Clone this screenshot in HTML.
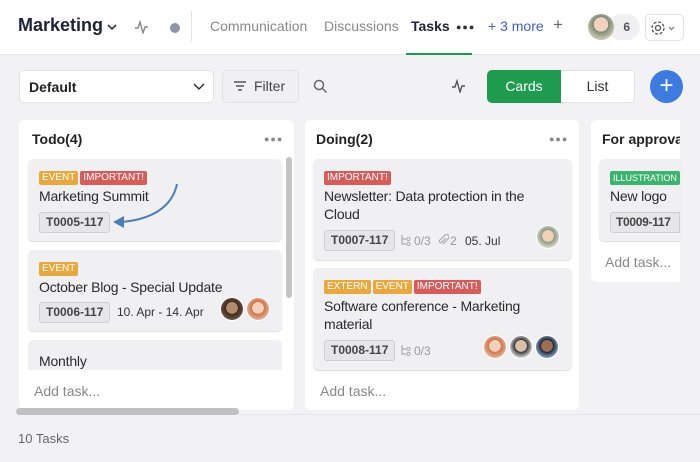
<!DOCTYPE html>
<html><head><meta charset="utf-8"><style>
*{box-sizing:border-box;margin:0;padding:0}
body{width:700px;height:462px;overflow:hidden;background:#f2f2f4;font-family:"Liberation Sans",sans-serif;color:#222;position:relative;font-size:14px}
.a{position:absolute}
.hdr{left:0;top:0;width:700px;height:55px;background:#fff;border-bottom:1px solid #e3e3e6}
.nav{top:18px;font-size:14px;color:#888}
.col{background:#fff;border-radius:6px}
.card{background:#f0f0f2;border-radius:5px;box-shadow:0 1px 1px #ddd}
.tags{line-height:14px;height:14px;font-size:0;white-space:nowrap}
.tag{display:inline-block;height:14px;line-height:14px;font-size:10px;color:#fff;padding:0 3px;border-radius:2px;margin-right:2px;vertical-align:top}
.o{background:#e8a83e}.r{background:#d65b5b}.g{background:#3cb46e}
.ttl{font-size:14px;color:#2a2a2a;line-height:18px;letter-spacing:-0.2px}
.id{display:inline-block;height:21px;line-height:19px;font-size:12px;font-weight:bold;color:#444;background:#e6e6e8;border:1px solid #cfcfd2;border-radius:3px;padding:0 6px}
.meta{font-size:12px;color:#999}
.add{font-size:14px;color:#888}
.av{width:24px;height:24px;border-radius:50%;border:1px solid #fff}
.ch{font-size:14px;font-weight:bold}
.dots{color:#888;font-size:9px;letter-spacing:1px}
.btn{background:#fff;border:1px solid #e1e1e4;border-radius:5px}
</style></head><body>
<div class="a hdr"></div>
<div class="a" style="left:18px;top:15px;font-size:18px;font-weight:bold;color:#1d2333">Marketing</div>
<svg class="a" style="left:106px;top:22px" width="12" height="10"><path d="M2 3l4 4 4-4" stroke="#333" stroke-width="1.6" fill="none"/></svg>
<svg class="a" style="left:134px;top:20px" width="16" height="14"><path d="M1 8h3l2-6 3 11 2-6h3" stroke="#888" stroke-width="1.4" fill="none"/></svg>
<div class="a" style="left:170px;top:23px;width:10px;height:10px;border-radius:50%;background:#8d95ad"></div>
<div class="a" style="left:191px;top:11px;width:1px;height:30px;background:#e3e3e6"></div>
<div class="a nav" style="left:210px">Communication</div>
<div class="a nav" style="left:324px">Discussions</div>
<div class="a nav" style="left:411px;color:#1d2333;font-weight:bold">Tasks</div>
<div class="a dots" style="left:456px;top:22px;color:#333">●●●</div>
<div class="a nav" style="left:488px;color:#3a5fcd">+ 3 more</div>
<div class="a nav" style="left:553px;color:#666;font-size:17px;top:15px">+</div>
<div class="a" style="left:406px;top:53px;width:66px;height:2px;background:#1e9b4e"></div>
<div class="a" style="left:608px;top:14px;width:32px;height:26px;border-radius:13px;background:#f0f0f2;color:#555;font-size:12px;font-weight:bold;text-align:right;padding:6px 10px 0 0">6</div>
<div class="a" style="left:588px;top:14px;width:26px;height:26px;border-radius:50%;background:radial-gradient(circle at 50% 40%,#f0d2bd 35%,#7a8a70 36%,#c9c0b0 70%)"></div>
<div class="a btn" style="left:645px;top:14px;width:39px;height:27px"></div>
<svg class="a" style="left:650px;top:19px" width="30" height="18"><circle cx="8" cy="9" r="2.5" stroke="#555" fill="none" stroke-width="1.3"/><circle cx="8" cy="9" r="6" stroke="#555" fill="none" stroke-width="1.3" stroke-dasharray="3 1.7"/><path d="M19 8l2.5 2.5 2.5-2.5" stroke="#777" fill="none" stroke-width="1.2"/></svg>

<div class="a btn" style="left:19px;top:70px;width:195px;height:33px"></div>
<div class="a" style="left:29px;top:79px;font-weight:bold;font-size:14px;color:#222">Default</div>
<svg class="a" style="left:193px;top:82px" width="12" height="10"><path d="M1 2l5 5 5-5" stroke="#333" stroke-width="1.5" fill="none"/></svg>
<div class="a btn" style="left:222px;top:70px;width:77px;height:33px;background:#f0f0f2"></div>
<svg class="a" style="left:233px;top:80px" width="14" height="12"><path d="M1 2h12M3 6h8M5 10h4" stroke="#555" stroke-width="1.5"/></svg>
<div class="a" style="left:254px;top:78px;color:#444">Filter</div>
<svg class="a" style="left:313px;top:79px" width="15" height="15"><circle cx="6" cy="6" r="4.5" stroke="#666" stroke-width="1.5" fill="none"/><path d="M9.5 9.5l4 4" stroke="#666" stroke-width="1.5"/></svg>
<svg class="a" style="left:451px;top:79px" width="16" height="14"><path d="M1 8h3l2-6 3 11 2-6h3" stroke="#555" stroke-width="1.4" fill="none"/></svg>
<div class="a" style="left:487px;top:70px;width:74px;height:33px;background:#1e9b4e;border-radius:5px 0 0 5px;color:#fff;text-align:center;line-height:33px">Cards</div>
<div class="a" style="left:561px;top:70px;width:74px;height:33px;background:#fff;border:1px solid #e1e1e4;border-left:0;border-radius:0 5px 5px 0;color:#333;text-align:center;line-height:31px">List</div>
<div class="a" style="left:650px;top:70px;width:33px;height:33px;border-radius:50%;background:#3d7be0;color:#fff;text-align:center;font-size:24px;line-height:31px">+</div>

<!-- Todo -->
<div class="a col" style="left:19px;top:120px;width:275px;height:290px"></div>
<div class="a ch" style="left:32px;top:131px">Todo(4)</div>
<div class="a dots" style="left:264px;top:134px">●●●</div>
<div class="a card" style="left:28px;top:159px;width:254px;height:82px"></div>
<div class="a tags" style="left:39px;top:171px"><span class="tag o">EVENT</span><span class="tag r">IMPORTANT!</span></div>
<div class="a ttl" style="left:39px;top:187px">Marketing Summit</div>
<div class="a id" style="left:39px;top:212px">T0005-117</div>
<svg class="a" style="left:110px;top:180px" width="72" height="50"><path d="M67 4C62 28 40 40 10 42" stroke="#4a7fb8" stroke-width="2" fill="none"/><path d="M3 42l11-6v12z" fill="#4a7fb8"/></svg>
<div class="a card" style="left:28px;top:250px;width:254px;height:81px"></div>
<div class="a tags" style="left:39px;top:262px"><span class="tag o">EVENT</span></div>
<div class="a ttl" style="left:39px;top:278px">October Blog - Special Update</div>
<div class="a id" style="left:39px;top:302px">T0006-117</div>
<div class="a" style="left:117px;top:305px;font-size:12px;color:#333">10. Apr - 14. Apr</div>
<div class="a av" style="left:220px;top:297px;background:radial-gradient(circle at 50% 45%,#b58a6a 35%,#3a2a20 37%,#6a5040 70%)"></div>
<div class="a av" style="left:246px;top:297px;background:radial-gradient(circle at 50% 45%,#f3d0b8 35%,#d0704a 37%,#e0b090 70%)"></div>
<div class="a card" style="left:28px;top:340px;width:254px;height:30px;border-radius:5px 5px 0 0;box-shadow:none"></div>
<div class="a ttl" style="left:39px;top:352px">Monthly</div>
<div class="a" style="left:286px;top:157px;width:6px;height:141px;border-radius:3px;background:#c4c4c6"></div>
<div class="a add" style="left:34px;top:383px">Add task...</div>

<!-- Doing -->
<div class="a col" style="left:305px;top:120px;width:274px;height:290px"></div>
<div class="a ch" style="left:316px;top:131px">Doing(2)</div>
<div class="a dots" style="left:549px;top:134px">●●●</div>
<div class="a card" style="left:313px;top:159px;width:259px;height:101px"></div>
<div class="a tags" style="left:324px;top:171px"><span class="tag r">IMPORTANT!</span></div>
<div class="a ttl" style="left:324px;top:187px;width:225px">Newsletter: Data protection in the Cloud</div>
<div class="a id" style="left:324px;top:230px">T0007-117</div>
<svg class="a" style="left:400px;top:234px" width="12" height="12"><path d="M2 1v9h4M2 5h4" stroke="#aaa" fill="none" stroke-width="1.2"/><circle cx="8.5" cy="5" r="1.6" stroke="#aaa" fill="none"/><circle cx="8.5" cy="10" r="1.6" stroke="#aaa" fill="none"/></svg>
<div class="a meta" style="left:414px;top:234px">0/3</div>
<svg class="a" style="left:437px;top:234px" width="12" height="12"><path d="M9 4L4.5 8.5a1.5 1.5 0 0 1-2-2L8 1a2.5 2.5 0 0 1 3.5 3.5L6 10" stroke="#aaa" fill="none" stroke-width="1.2"/></svg>
<div class="a meta" style="left:450px;top:234px">2</div>
<div class="a" style="left:465px;top:234px;font-size:12px;color:#333">05. Jul</div>
<div class="a av" style="left:536px;top:225px;background:radial-gradient(circle at 50% 45%,#efd0b8 35%,#8a9a80 37%,#d0d0c8 70%)"></div>
<div class="a card" style="left:313px;top:268px;width:259px;height:102px"></div>
<div class="a tags" style="left:324px;top:280px"><span class="tag o">EXTERN</span><span class="tag o">EVENT</span><span class="tag r">IMPORTANT!</span></div>
<div class="a ttl" style="left:324px;top:297px;width:240px">Software conference - Marketing material</div>
<div class="a id" style="left:324px;top:340px">T0008-117</div>
<svg class="a" style="left:400px;top:344px" width="12" height="12"><path d="M2 1v9h4M2 5h4" stroke="#aaa" fill="none" stroke-width="1.2"/><circle cx="8.5" cy="5" r="1.6" stroke="#aaa" fill="none"/><circle cx="8.5" cy="10" r="1.6" stroke="#aaa" fill="none"/></svg>
<div class="a meta" style="left:414px;top:344px">0/3</div>
<div class="a av" style="left:483px;top:335px;background:radial-gradient(circle at 50% 45%,#f3d0b8 35%,#d0704a 37%,#e0b090 70%)"></div>
<div class="a av" style="left:509px;top:335px;background:radial-gradient(circle at 50% 45%,#d8c0a8 35%,#333 37%,#ccc 70%)"></div>
<div class="a av" style="left:535px;top:335px;background:radial-gradient(circle at 50% 45%,#9a7050 35%,#223 37%,#7a9ab8 70%)"></div>
<div class="a add" style="left:320px;top:383px">Add task...</div>

<!-- For approval -->
<div class="a col" style="left:591px;top:120px;width:89px;height:162px;border-radius:6px 0 0 6px;overflow:hidden"></div>
<div class="a ch" style="left:602px;top:131px;width:78px;overflow:hidden;white-space:nowrap">For approval</div>
<div class="a card" style="left:599px;top:159px;width:81px;height:82px;border-radius:5px 0 0 5px"></div>
<div class="a tags" style="left:610px;top:171px"><span class="tag g" style="font-size:9px">ILLUSTRATION</span></div>
<div class="a ttl" style="left:610px;top:187px">New logo</div>
<div class="a id" style="left:610px;top:212px;border-radius:3px 0 0 3px;padding:0 3px 0 5px;letter-spacing:-0.3px;white-space:nowrap;width:70px;overflow:hidden">T0009-117</div>
<div class="a add" style="left:605px;top:254px">Add task...</div>

<div class="a" style="left:16px;top:408px;width:223px;height:7px;border-radius:4px;background:#c0c0c2"></div>
<div class="a" style="left:239px;top:414px;width:461px;height:1px;background:#e6e6e8"></div>
<div class="a" style="left:18px;top:431px;font-size:13px;color:#666">10 Tasks</div>
</body></html>
